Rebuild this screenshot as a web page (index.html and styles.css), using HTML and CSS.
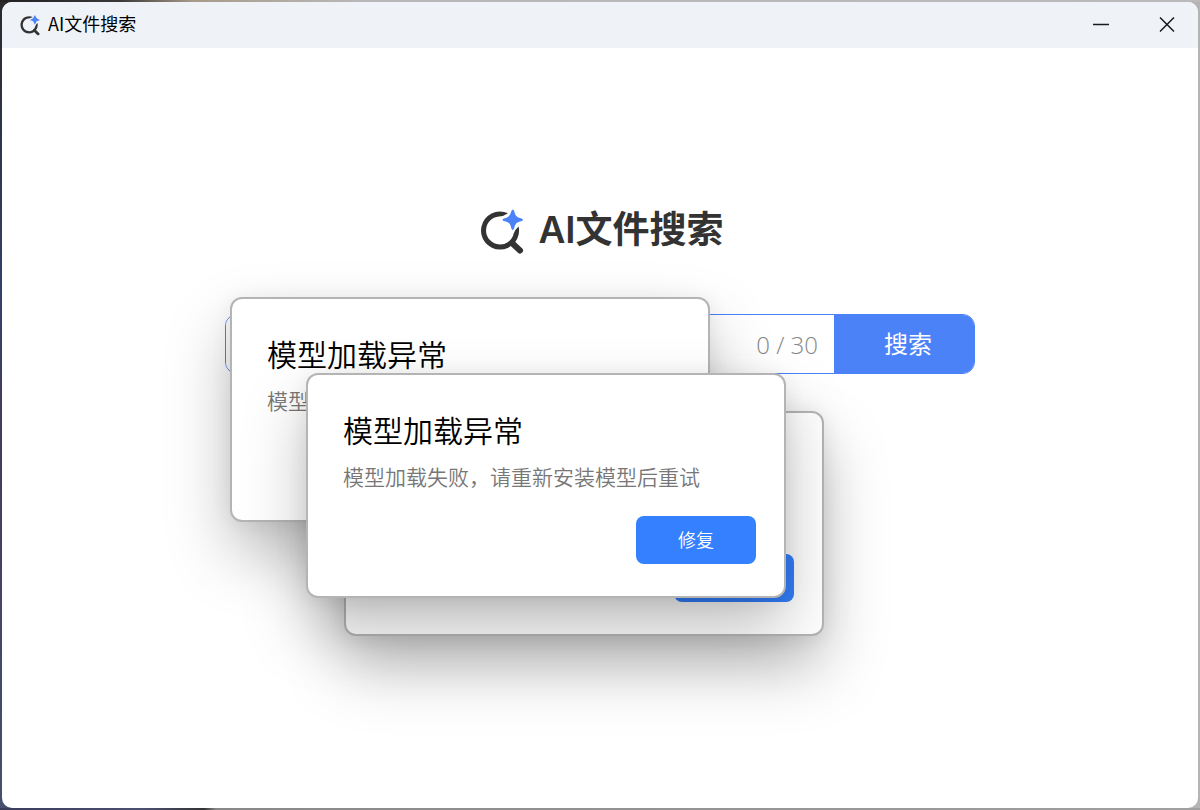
FILE: index.html
```html
<!DOCTYPE html>
<html lang="zh-CN">
<head>
  <meta charset="UTF-8">
  <title>AI文件搜索</title>
  <link rel="stylesheet" href="styles.css">
</head>
<body>
  <svg class="symbols" aria-hidden="true">
    <symbol id="logo" viewBox="0 0 44 46">
      <path fill="#333" d="M28 4.3A19 19 0 1 0 38.6 17.5Q35.5 20 33.7 24.5A14 14 0 1 1 19 7.5Q23.500 7.500 28 4.300Z"/>
      <path fill="none" stroke="#333" stroke-width="6" stroke-linecap="round" d="M32 34L40 41.500"/>
      <path fill="#4b82f8" d="M32.700 .5Q34 .5 34.700 4Q35.700 7.700 39 8.700Q43 9.500 43 10.700Q43 12 39 12.700Q35.700 13.700 34.700 17Q34 21 32.700 21Q31.500 21 30.700 17Q29.700 13.700 26.500 12.700Q22.500 12 22.500 10.700Q22.500 9.500 26.500 8.700Q29.700 7.700 30.700 4Q31.500 .5 32.700 .5Z"/>
    </symbol>
  </svg>

  <div class="window">
    <header class="titlebar">
      <svg class="titlebar-logo" aria-hidden="true"><use href="#logo"/></svg>
      <span class="titlebar-name">AI文件搜索</span>
      <button class="window-btn" type="button" aria-label="最小化">
        <svg viewBox="0 0 16 16"><path d="M0 7.500H16"/></svg>
      </button>
      <button class="window-btn" type="button" aria-label="关闭">
        <svg viewBox="0 0 16 16"><path d="M1 .5L15 14.500M15 .5L1 14.500"/></svg>
      </button>
    </header>

    <main class="content">
      <h1 class="brand">
        <svg class="brand-logo" aria-hidden="true"><use href="#logo"/></svg>
        <span>AI文件搜索</span>
      </h1>
      <form class="search">
        <input class="search-input" type="text" maxlength="30" aria-label="搜索内容">
        <span class="search-count">0 / 30</span>
        <button class="search-btn" type="submit">搜索</button>
      </form>
    </main>

    <!-- Stacked error dialogs, the last one is on top -->
    <section class="dialog dialog-back" role="alertdialog" aria-label="模型加载异常">
      <button class="fix-btn" type="button" aria-label="修复"></button>
    </section>
    <section class="dialog dialog-left" role="alertdialog" aria-label="模型加载异常">
      <h2>模型加载异常</h2>
      <p>模型</p>
    </section>
    <section class="dialog dialog-front" role="alertdialog" aria-label="模型加载异常">
      <h2>模型加载异常</h2>
      <p>模型加载失败，请重新安装模型后重试</p>
      <button class="fix-btn" type="button">修复</button>
    </section>
  </div>
</body>
</html>
```
FILE: styles.css
```css
* {
  box-sizing: border-box;
}

body {
  margin: 0;
  padding: 2px;
  min-height: 100vh;
  display: flex;
  font-family: "Noto Sans CJK SC", sans-serif;
  /* Desktop showing around the window edge */
  background:
    linear-gradient(to right, #222 0, #3a3838 10%, #a89a88 16%, #b8b8b8 30%, #bababa 100%) top / 100% 2px no-repeat,
    linear-gradient(to right, #3a3c5c 0, #4c5070 12%, #333 17%, #888 18%, #a0a0a0 100%) bottom / 100% 2px no-repeat,
    linear-gradient(to bottom, #2a2a2c 0, #34406a 35%, #443c5c 55%, #46506e 100%) left / 50% 100% no-repeat,
    #b4b4b4;
}

button,
input {
  font-family: inherit;
  border: none;
  padding: 0;
}

button {
  cursor: pointer;
}

.symbols {
  position: absolute;
  width: 0;
  height: 0;
}

.window {
  position: relative;
  flex: 1;
  background: #fff;
  border-radius: 10px;
  overflow: hidden;
}

.titlebar {
  display: flex;
  align-items: center;
  height: 46px;
  padding-left: 18px;
  background: #eff3f8;
}

.titlebar-logo {
  width: 20px;
  height: 21px;
  margin-right: 8px;
}

.titlebar-name {
  flex: 1;
  padding-bottom: 4px;
  font-size: 18px;
  line-height: 24px;
  color: #000;
}

.window-btn {
  display: flex;
  align-items: center;
  justify-content: center;
  width: 66px;
  height: 46px;
  padding-left: 4px;
  background: none;
}

.window-btn svg {
  width: 16px;
  height: 16px;
  fill: none;
  stroke: #1a1a1a;
  stroke-width: 1.500;
}

.content {
  display: flex;
  flex-direction: column;
  align-items: center;
  padding: 156px 20px 24px;
}

.brand {
  display: flex;
  align-items: center;
  gap: 14px;
  margin: 0 0 56px;
  padding: 2px 0 0 4px;
  font-family: Inter, "Noto Sans CJK SC", sans-serif;
  font-size: 37px;
  line-height: 52px;
  font-weight: 600;
  color: #333;
}

.brand span {
  padding-bottom: 4px;
  line-height: 48px;
}

.brand-logo {
  width: 44px;
  height: 46px;
}

.search {
  display: flex;
  width: 100%;
  max-width: 750px;
  height: 60px;
  border: 1px solid #4b82f8;
  border-radius: 12px;
  overflow: hidden;
}

.search-input {
  flex: 1;
  min-width: 0;
  padding-left: 20px;
  font-size: 24px;
  outline: none;
}

.search-count {
  padding: 0 16px;
  font-family: "Open Sans", sans-serif;
  font-size: 24px;
  font-weight: 350;
  line-height: 60px;
  color: #888;
}

.search-btn {
  width: 140px;
  padding: 0 0 4px 8px;
  background: #4b82f8;
  color: #fff;
  font-size: 24px;
}

.dialog {
  position: absolute;
  display: flex;
  flex-direction: column;
  width: 480px;
  min-height: 225px;
  padding: 32px 28px 32px 35px;
  background: #fff;
  border: 2px solid #b4b4b4;
  border-radius: 12px;
  box-shadow: 0 32px 64px rgba(0, 0, 0, 0.25), 0 2px 20px rgba(0, 0, 0, 0.07);
}

.dialog-left {
  top: 295px;
  left: calc(50% - 370px);
}

.dialog-front {
  top: 371px;
  left: calc(50% - 294px);
}

.dialog-back {
  top: 409px;
  left: calc(50% - 256px);
}

.dialog h2 {
  margin: 0 0 10px;
  font-size: 30px;
  line-height: 44px;
  font-weight: 350;
  color: #000;
}

.dialog p {
  margin: 0;
  font-size: 21px;
  line-height: 30px;
  font-weight: 350;
  color: #777;
}

.fix-btn {
  width: 120px;
  height: 48px;
  margin-top: auto;
  margin-left: auto;
  padding-bottom: 2px;
  border-radius: 8px;
  background: #3480ff;
  color: #fff;
  font-size: 18px;
  font-weight: 350;
}
```
